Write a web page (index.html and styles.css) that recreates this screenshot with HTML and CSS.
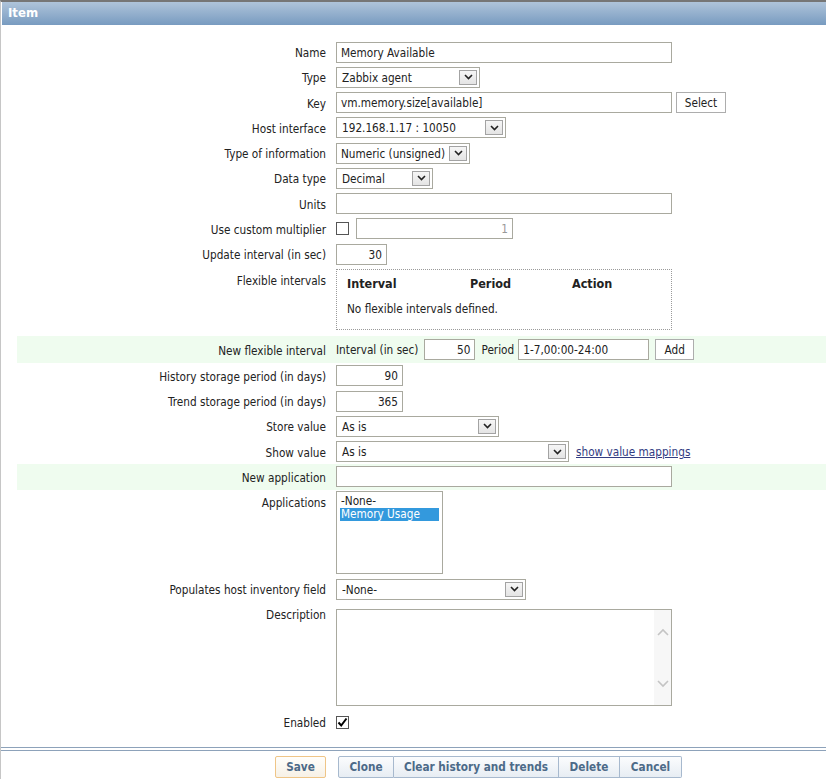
FILE: index.html
```html
<!DOCTYPE html>
<html>
<head>
<meta charset="utf-8">
<title>Item</title>
<link rel="stylesheet" href="styles.css">
</head>
<body>
<div class="page">
  <div class="header">Item</div>
  <div class="form">
    <div class="row"><div class="lbl">Name</div><div class="ctl"><div class="inp w-full">Memory Available</div></div></div>
    <div class="row"><div class="lbl">Type</div><div class="ctl"><div class="sel w-type"><span>Zabbix agent</span><span class="arr"><svg width="9" height="6" viewBox="0 0 9 6"><path d="M1 1 L4.5 4.5 L8 1" fill="none" stroke="#222" stroke-width="1.6"/></svg></span></div></div></div>
    <div class="row"><div class="lbl">Key</div><div class="ctl"><div class="inp w-full">vm.memory.size[available]</div><div class="pbtn btn-select">Select</div></div></div>
    <div class="row"><div class="lbl">Host interface</div><div class="ctl"><div class="sel w-host"><span>192.168.1.17 : 10050</span><span class="arr"><svg width="9" height="6" viewBox="0 0 9 6"><path d="M1 1 L4.5 4.5 L8 1" fill="none" stroke="#222" stroke-width="1.6"/></svg></span></div></div></div>
    <div class="row"><div class="lbl">Type of information</div><div class="ctl"><div class="sel w-info"><span>Numeric (unsigned)</span><span class="arr"><svg width="9" height="6" viewBox="0 0 9 6"><path d="M1 1 L4.5 4.5 L8 1" fill="none" stroke="#222" stroke-width="1.6"/></svg></span></div></div></div>
    <div class="row"><div class="lbl">Data type</div><div class="ctl"><div class="sel w-data"><span>Decimal</span><span class="arr"><svg width="9" height="6" viewBox="0 0 9 6"><path d="M1 1 L4.5 4.5 L8 1" fill="none" stroke="#222" stroke-width="1.6"/></svg></span></div></div></div>
    <div class="row"><div class="lbl">Units</div><div class="ctl"><div class="inp w-full"></div></div></div>
    <div class="row"><div class="lbl">Use custom multiplier</div><div class="ctl"><span class="chk"></span><div class="inp num w-mult muted">1</div></div></div>
    <div class="row"><div class="lbl">Update interval (in sec)</div><div class="ctl"><div class="inp num w-upd">30</div></div></div>
    <div class="row top flex-row"><div class="lbl">Flexible intervals</div><div class="ctl">
      <div class="flextable">
        <div class="fhead"><span class="c1">Interval</span><span class="c2">Period</span><span class="c3">Action</span></div>
        <div class="fbody">No flexible intervals defined.</div>
      </div>
    </div></div>
    <div class="row new newflex"><div class="lbl">New flexible interval</div><div class="ctl"><span class="txt">Interval (in sec)</span><div class="inp num w-fint">50</div><span class="txt">Period</span><div class="inp w-per">1-7,00:00-24:00</div><div class="pbtn btn-add">Add</div></div></div>
    <div class="row"><div class="lbl">History storage period (in days)</div><div class="ctl"><div class="inp num w-hist">90</div></div></div>
    <div class="row"><div class="lbl">Trend storage period (in days)</div><div class="ctl"><div class="inp num w-hist">365</div></div></div>
    <div class="row"><div class="lbl">Store value</div><div class="ctl"><div class="sel w-store"><span>As is</span><span class="arr"><svg width="9" height="6" viewBox="0 0 9 6"><path d="M1 1 L4.5 4.5 L8 1" fill="none" stroke="#222" stroke-width="1.6"/></svg></span></div></div></div>
    <div class="row"><div class="lbl">Show value</div><div class="ctl"><div class="sel w-show"><span>As is</span><span class="arr"><svg width="9" height="6" viewBox="0 0 9 6"><path d="M1 1 L4.5 4.5 L8 1" fill="none" stroke="#222" stroke-width="1.6"/></svg></span></div><a class="link" href="#">show value mappings</a></div></div>
    <div class="row new"><div class="lbl">New application</div><div class="ctl"><div class="inp w-full"></div></div></div>
    <div class="row top"><div class="lbl">Applications</div><div class="ctl">
      <div class="listbox"><div class="opt">-None-</div><div class="opt selected">Memory Usage</div></div>
    </div></div>
    <div class="row"><div class="lbl">Populates host inventory field</div><div class="ctl"><div class="sel w-pop"><span>-None-</span><span class="arr"><svg width="9" height="6" viewBox="0 0 9 6"><path d="M1 1 L4.5 4.5 L8 1" fill="none" stroke="#222" stroke-width="1.6"/></svg></span></div></div></div>
    <div class="row top"><div class="lbl">Description</div><div class="ctl">
      <div class="textarea"><div class="ta-body"></div><div class="scroll"><svg width="12" height="8" viewBox="0 0 12 8"><path d="M1 7 L6 2 L11 7" fill="none" stroke="#c4c4c4" stroke-width="1.6"/></svg><svg width="12" height="8" viewBox="0 0 12 8"><path d="M1 1 L6 6 L11 1" fill="none" stroke="#c4c4c4" stroke-width="1.6"/></svg></div></div>
    </div></div>
    <div class="row"><div class="lbl">Enabled</div><div class="ctl"><span class="chk checked"><svg width="11" height="11" viewBox="0 0 11 11"><path d="M1.5 5.5 L4.2 8.5 L9.5 1.5" fill="none" stroke="#000" stroke-width="2"/></svg></span></div></div>
  </div>
  <div class="footer-lines"></div>
  <div class="footer">
    <div class="fl"><div class="btn save">Save</div></div>
    <div class="ctl group">
      <div class="btn b-clone">Clone</div><div class="btn b-clear">Clear history and trends</div><div class="btn b-delete">Delete</div><div class="btn b-cancel">Cancel</div>
    </div>
  </div>
</div>
</body>
</html>
```

FILE: styles.css
```css
html, body {
  margin: 0;
  padding: 0;
  background: #fff;
}
body {
  font-family: "DejaVu Sans Condensed", "DejaVu Sans", sans-serif;
  font-stretch: condensed;
  font-size: 11.7px;
  color: #222;
}
.page {
  border-top: 2px solid #767676;
  border-left: 1px solid #c6c6c6;
  min-height: 779px;
  box-sizing: border-box;
}
.header {
  margin-left: 1px;
  height: 23px;
  line-height: 21px;
  padding-left: 6px;
  background: linear-gradient(#afc4da, #789bc0);
  color: #fff;
  font-weight: bold;
  font-size: 13px;
}
.form {
  padding-top: 14.5px;
}
.row {
  display: grid;
  grid-template-columns: 319px 1fr;
  margin-left: 16px;
  min-height: 25.25px;
  align-items: center;
}
.row .lbl {
  text-align: right;
  padding-right: 10px;
  padding-top: 2px;
  white-space: nowrap;
}
.row.top {
  align-items: start;
}
.row.top .lbl {
  line-height: 25px;
  padding-top: 1px;
}
.row.new {
  background: #effcef;
}
.ctl {
  display: flex;
  align-items: center;
}
.inp {
  box-sizing: border-box;
  height: 21px;
  line-height: 20px;
  border: 1px solid #a9a99f;
  background: #fff;
  padding: 0 4px;
  white-space: nowrap;
  overflow: hidden;
}
.inp.num { text-align: right; }
.inp.muted { color: #999; }
.w-full { width: 336px; }
.w-mult { width: 157px; margin-left: 7px; }
.w-upd { width: 51px; }
.w-fint { width: 51px; margin: 0 6px 0 6px; }
.w-per { width: 131px; margin-left: 4px; }
.w-hist { width: 67px; }
.sel {
  box-sizing: border-box;
  height: 21px;
  border: 1px solid #a9a99f;
  background: #fff;
  display: flex;
  align-items: center;
  justify-content: space-between;
  padding: 1px 2px 0 5px;
  white-space: nowrap;
}
.sel .arr {
  box-sizing: border-box;
  flex: none;
  width: 18px;
  height: 15px;
  margin-top: -1px;
  border: 1px solid #a3a3a3;
  background: linear-gradient(#f6f6f6, #e4e4e4);
  display: flex;
  align-items: center;
  justify-content: center;
}
.w-type { width: 144px; }
.w-host { width: 170px; }
.w-info { width: 134px; padding-left: 4px; }
.w-data { width: 97px; }
.w-store { width: 163px; }
.w-show { width: 233px; }
.w-pop { width: 190px; }
.pbtn {
  box-sizing: border-box;
  height: 21px;
  line-height: 20px;
  border: 1px solid #adadad;
  background: #fff;
  text-align: center;
}
.btn-select { width: 50px; margin-left: 4px; }
.btn-add { width: 39px; margin-left: 6px; }
.txt { white-space: nowrap; padding-top: 1px; }
.chk {
  box-sizing: border-box;
  flex: none;
  width: 13px;
  height: 13px;
  border: 1px solid #555;
  background: #fff;
  display: flex;
  align-items: center;
  justify-content: center;
}
.flex-row { padding: 1px 0 6px; }
.flextable {
  box-sizing: border-box;
  width: 336px;
  height: 61px;
  margin-top: 1.5px;
  border: 1px dotted #9a9a9a;
  padding: 6px 10px 0;
}
.fhead {
  display: flex;
  font-weight: bold;
  font-size: 12.5px;
  height: 16px;
  line-height: 16px;
}
.fhead .c1 { width: 123px; }
.fhead .c2 { width: 102px; }
.fbody {
  margin-top: 10px;
  line-height: 14px;
}
.newflex { min-height: 27px; }
.link {
  color: #323c82;
  text-decoration: underline;
  margin-left: 7px;
  padding-top: 1px;
  white-space: nowrap;
}
.listbox {
  box-sizing: border-box;
  width: 107px;
  height: 83px;
  margin: 1.5px 0 2.5px;
  border: 1px solid #a9a99f;
  padding: 3px 3px;
}
.opt {
  height: 13px;
  line-height: 13px;
  padding-left: 1px;
  white-space: nowrap;
}
.opt.selected {
  background: #3399dd;
  color: #fff;
}
.textarea {
  box-sizing: border-box;
  width: 336px;
  height: 97px;
  margin: 7.5px 0 3.5px;
  border: 1px solid #a9a99f;
  display: flex;
}
.ta-body { flex: 1; }
.scroll {
  width: 17px;
  background: #f7f7f7;
  display: flex;
  flex-direction: column;
  justify-content: space-between;
  align-items: center;
  padding: 18px 0 17px;
}
.footer-lines {
  margin-top: 11.5px;
  height: 2px;
  border-top: 1px solid #8da2ba;
  border-bottom: 1px solid #8da2ba;
}
.footer {
  display: grid;
  grid-template-columns: 319px 1fr;
  margin-left: 16px;
  padding-top: 5px;
}
.fl {
  display: flex;
  justify-content: flex-end;
  padding-right: 10px;
}
.btn {
  box-sizing: border-box;
  height: 22px;
  line-height: 21px;
  font-weight: bold;
  font-size: 11.7px;
  color: #4c6a88;
  text-align: center;
  border: 1px solid #a7b9ce;
  background: linear-gradient(#fbfcfd, #e7edf3);
  white-space: nowrap;
}
.btn.save {
  width: 51px;
  border-color: #efc587;
  background: linear-gradient(#fffefb, #f7f1e6);
  border-radius: 2px;
}
.group { margin-left: 2px; }
.group .btn + .btn { border-left: none; }
.b-clone { width: 56px; border-radius: 2px 0 0 2px; }
.b-clear { width: 165px; }
.b-delete { width: 61px; }
.b-cancel { width: 62px; border-radius: 0 2px 2px 0; }
```
